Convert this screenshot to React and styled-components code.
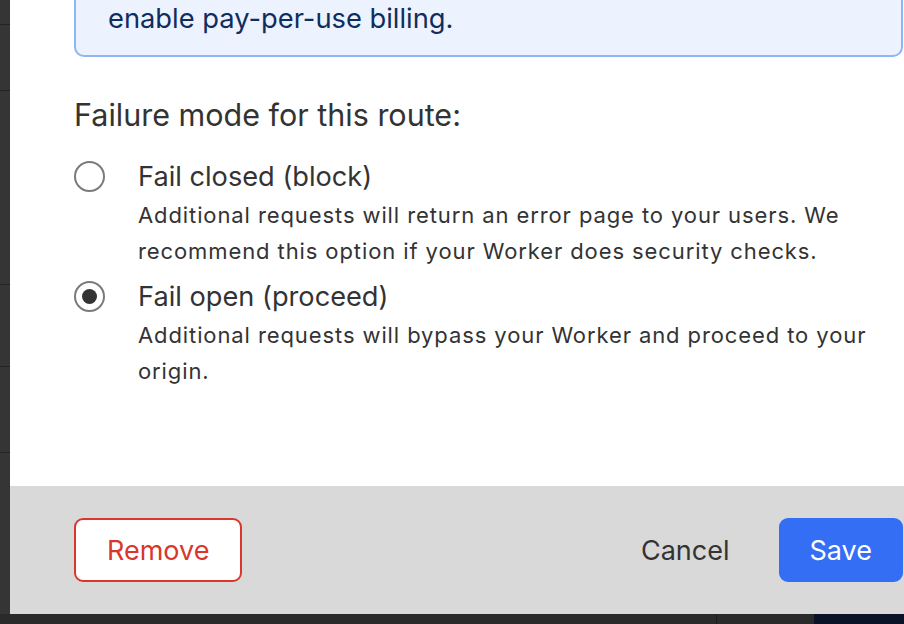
import React from "react";
import styled, { createGlobalStyle } from "styled-components";

const Global = createGlobalStyle`
  html, body { margin: 0; padding: 0; }
  body {
    width: 904px;
    height: 624px;
    overflow: hidden;
    background: #2b2b2b;
    font-family: Inter, "Noto Sans", "Liberation Sans", sans-serif;
    -webkit-font-smoothing: antialiased;
  }
`;

const Page = styled.div`
  display: grid;
  grid-template-columns: 10px 1fr;
  grid-template-rows: 614px 10px;
  width: 904px;
  height: 624px;
  overflow: hidden;
`;

const SideRail = styled.div`
  display: flex;
  flex-direction: column;
  background: #353535;
`;

const RailRow = styled.div`
  height: ${(p) => p.$h}px;
  flex: none;
  border-bottom: 1px solid #222;
`;

const BottomStrip = styled.div`
  grid-column: 1 / span 2;
  display: grid;
  grid-template-columns: 716px 1px 97px 1fr;
  background: #2a2a2a;
`;

const Divider = styled.div`
  background: #1c1c1c;
`;

const Navy = styled.div`
  background: #0a1229;
`;

const Modal = styled.div`
  width: 957px;
  margin-top: -51px;
  height: 665px;
  display: flex;
  flex-direction: column;
  background: #fff;
  color: #333;
`;

const Body = styled.div`
  flex: 1;
  padding: 32px 64px 0;
  display: flex;
  flex-direction: column;
`;

const InfoBox = styled.div`
  background: #ecf3fe;
  border: 2px solid #8cb6f7;
  border-radius: 10px;
  padding: 18px 32px;
  color: #102d60;
  font-size: 27.3px;
  line-height: 36px;
`;

const Title = styled.div`
  margin-top: 40px;
  font-size: 30.5px;
  line-height: 36px;
  color: #333;
`;

const Options = styled.div`
  margin-top: 25px;
  display: flex;
  flex-direction: column;
  gap: 9px;
`;

const Option = styled.label`
  display: grid;
  grid-template-columns: 64px 1fr;
  align-items: start;
`;

const Radio = styled.span`
  width: 31px;
  height: 31px;
  box-sizing: border-box;
  margin-top: 3px;
  border-radius: 50%;
  border: 2px solid #7a7a7a;
  background: #fff;
  display: flex;
  align-items: center;
  justify-content: center;
  &::after {
    content: "";
    width: 15px;
    height: 15px;
    border-radius: 50%;
    background: ${(p) => (p.$checked ? "#333" : "transparent")};
  }
`;

const OptionText = styled.div`
  display: flex;
  flex-direction: column;
`;

const OptionLabel = styled.div`
  font-size: 27.2px;
  line-height: 38px;
  color: #333;
`;

const OptionDesc = styled.div`
  margin-top: 1px;
  font-size: 22px;
  line-height: 36px;
  color: #333;
  letter-spacing: 0.9px;
`;

const Footer = styled.div`
  height: 128px;
  flex: none;
  box-sizing: border-box;
  background: #d9d9d9;
  padding: 32px 64px;
  display: flex;
  align-items: center;
  gap: 18px;
`;

const Button = styled.button`
  height: 64px;
  box-sizing: border-box;
  padding: 0 29px;
  border-radius: 9px;
  font-family: inherit;
  font-size: 27px;
  cursor: pointer;
  border: 2px solid transparent;
  background: transparent;
  color: #333;
  ${(p) =>
    p.$variant === "danger" &&
    `
    padding: 0 31px;
    background: #fff;
    border-color: #d8372b;
    color: #d8372b;
    margin-right: auto;
  `}
  ${(p) =>
    p.$variant === "primary" &&
    `
    background: #336ef5;
    border-color: #336ef5;
    color: #fff;
  `}
`;

const options = [
  {
    label: "Fail closed (block)",
    desc: [
      "Additional requests will return an error page to your users. We",
      "recommend this option if your Worker does security checks.",
    ],
    checked: false,
  },
  {
    label: "Fail open (proceed)",
    desc: [
      "Additional requests will bypass your Worker and proceed to your",
      "origin.",
    ],
    checked: true,
  },
];

export default function App() {
  return (
    <>
      <Global />
      <Page>
        <SideRail>
          <RailRow $h={24} />
          <RailRow $h={65} />
          <RailRow $h={193} />
          <RailRow $h={81} />
          <RailRow $h={85} />
        </SideRail>
        <Modal>
          <Body>
            <InfoBox>enable pay-per-use billing.</InfoBox>
            <Title>Failure mode for this route:</Title>
            <Options>
              {options.map((o) => (
                <Option key={o.label}>
                  <Radio $checked={o.checked} />
                  <OptionText>
                    <OptionLabel>{o.label}</OptionLabel>
                    <OptionDesc>
                      {o.desc.map((l) => (
                        <div key={l}>{l}</div>
                      ))}
                    </OptionDesc>
                  </OptionText>
                </Option>
              ))}
            </Options>
          </Body>
          <Footer>
            <Button $variant="danger">Remove</Button>
            <Button>Cancel</Button>
            <Button $variant="primary">Save</Button>
          </Footer>
        </Modal>
        <BottomStrip>
          <div />
          <Divider />
          <div />
          <Navy />
        </BottomStrip>
      </Page>
    </>
  );
}
